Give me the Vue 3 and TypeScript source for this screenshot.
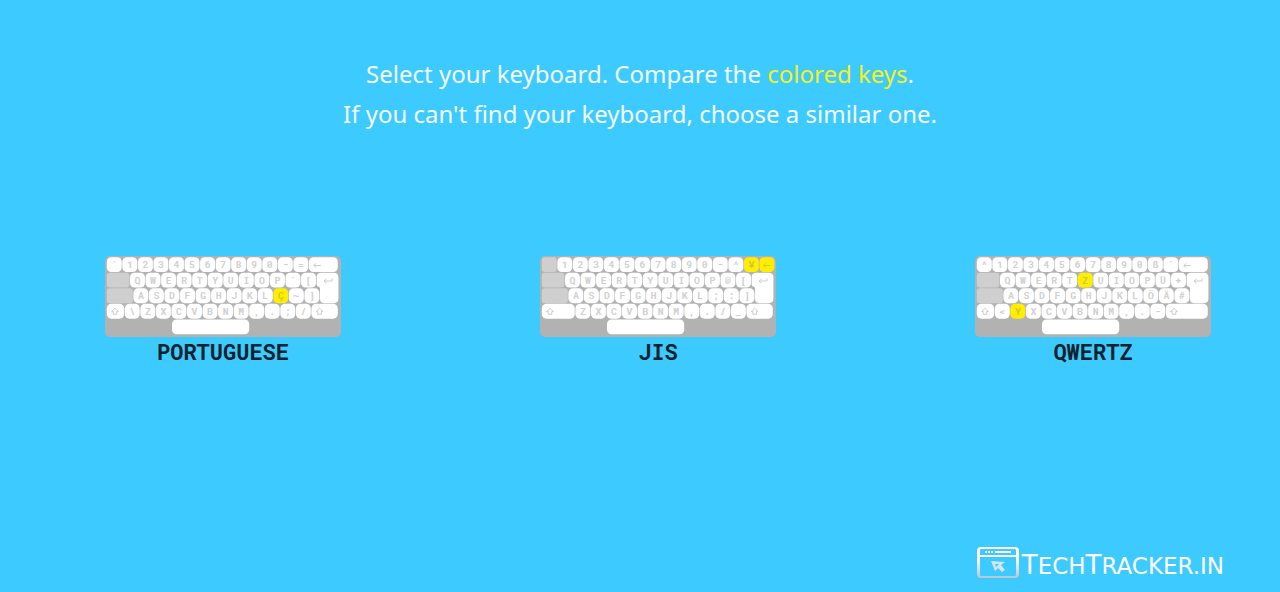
<script setup lang="ts">
type Tone = 'light' | 'muted' | 'accent'

interface Key {
  x: number
  y: number
  width: number
  label: string
  tone: Tone
}

interface Keyboard {
  name: string
  keys: Key[]
}

// Drawing units: ten per pixel at the keyboard's natural size.
const PITCH = 155.5
const GAP = 6
const LEFT = 18
const RIGHT = 2334
const ROWS = [12, 167, 323, 478, 634]
const KEY_HEIGHT = 149

function run(row: number, start: number, labels: string, accents = ''): Key[] {
  return labels.split(' ').map((label, i) => ({
    x: start + i * PITCH,
    y: ROWS[row],
    width: PITCH - GAP,
    label,
    tone: accents.includes(label) ? 'accent' : 'light',
  }))
}

function wide(row: number, start: number, end: number, label = '', tone: Tone = 'light'): Key {
  return { x: start, y: ROWS[row], width: end - start - GAP, label, tone }
}

const shared: Key[] = [
  wide(1, LEFT, 250, '', 'muted'),
  wide(2, LEFT, 284, '', 'muted'),
  wide(4, 670, 1448),
]

const keyboards: Keyboard[] = [
  {
    name: 'PORTUGUESE',
    keys: [
      ...shared,
      ...run(0, LEFT, '` 1 2 3 4 5 6 7 8 9 0 - ='),
      wide(0, 2040, RIGHT, '←'),
      ...run(1, 250, 'Q W E R T Y U I O P ´ ['),
      ...run(2, 284, 'A S D F G H J K L Ç ~ ]', 'Ç'),
      wide(3, LEFT, 198, '⇧'),
      ...run(3, 198, '\\ Z X C V B N M , . ; /'),
      wide(3, 2064, RIGHT, '⇧'),
    ],
  },
  {
    name: 'JIS',
    keys: [
      ...shared,
      wide(0, LEFT, 173, '', 'muted'),
      ...run(0, 173, '1 2 3 4 5 6 7 8 9 0 - ^ ¥ ←', '¥←'),
      ...run(1, 250, 'Q W E R T Y U I O P @ ['),
      ...run(2, 284, 'A S D F G H J K L ; : ]'),
      wide(3, LEFT, 354, '⇧'),
      ...run(3, 354, 'Z X C V B N M , . / _'),
      wide(3, 2064, RIGHT, '⇧'),
    ],
  },
  {
    name: 'QWERTZ',
    keys: [
      ...shared,
      ...run(0, LEFT, '^ 1 2 3 4 5 6 7 8 9 0 ß ´'),
      wide(0, 2040, RIGHT, '←'),
      ...run(1, 250, 'Q W E R T Z U I O P Ü +', 'Z'),
      ...run(2, 284, 'A S D F G H J K L Ö Ä #'),
      wide(3, LEFT, 198, '⇧'),
      ...run(3, 198, '< Y X C V B N M , . -', 'Y'),
      wide(3, 1908, RIGHT, '⇧'),
    ],
  },
]

function symbolAt(key: Key): string {
  return `translate(${key.x + Math.min(key.width / 2, 82)} ${key.y + 75})`
}
</script>

<template>
  <main class="screen">
    <h1 class="intro">
      Select your keyboard. Compare the <span class="hint">colored keys</span>.<br />
      If you can't find your keyboard, choose a similar one.
    </h1>

    <div class="choices">
      <button v-for="board in keyboards" :key="board.name" type="button" class="choice">
        <svg class="board" viewBox="0 0 2360 810" aria-hidden="true">
          <rect class="case" width="2360" height="810" rx="50" />
          <path
            class="light"
            d="M2162 167H2288Q2334 167 2334 213V426Q2334 472 2288 472H2192Q2150 472 2150 426V323Q2150 310 2132 306Q2116 300 2116 280V213Q2116 167 2162 167Z"
          />
          <path class="arrow" d="M2270 222V250H2190M2216 228L2190 250L2216 272" />
          <template v-for="(key, i) in board.keys" :key="i">
            <rect
              :class="key.tone"
              :x="key.x"
              :y="key.y"
              :width="key.width"
              :height="KEY_HEIGHT"
              :rx="key.tone === 'muted' ? 30 : 46"
            />
            <path
              v-if="key.label === '←'"
              class="arrow"
              :class="{ onaccent: key.tone === 'accent' }"
              :transform="symbolAt(key)"
              d="M36 8H-34M-10 -14L-34 8L-10 30"
            />
            <path
              v-else-if="key.label === '⇧'"
              class="arrow"
              :transform="symbolAt(key)"
              d="M0 -30L34 2H18V30H-18V2H-34Z"
            />
            <text
              v-else-if="key.label"
              class="legend"
              :class="{ onaccent: key.tone === 'accent' }"
              :x="key.x + key.width / 2"
              :y="key.y + 108"
            >{{ key.label }}</text>
          </template>
        </svg>
        <span class="name">{{ board.name }}</span>
      </button>
    </div>

    <footer class="brand">
      <svg class="brand-icon" viewBox="0 0 42 31" aria-hidden="true">
        <defs>
          <linearGradient id="frame" x1="0" y1="0" x2="0" y2="1">
            <stop offset="0.35" stop-color="#ffffff" />
            <stop offset="1" stop-color="#b4c6d4" />
          </linearGradient>
        </defs>
        <path
          fill="url(#frame)"
          fill-rule="evenodd"
          d="M4 0H38Q42 0 42 4V27Q42 31 38 31H4Q0 31 0 27V4Q0 0 4 0ZM4 2Q3 2 3 4V8H39V4Q39 2 38 2ZM3 10V27Q3 29 4 29H38Q39 29 39 27V10Z"
        />
        <path class="bar" d="M8 5H10M11 5H13M14 5H16M18 5H34" />
        <path
          fill="#d5e5ef"
          fill-rule="evenodd"
          d="M14 14L28 15L24 18L28 23L25 25L21 21L18 24ZM18 17L19 20L22 17Z"
        />
      </svg>
      <span class="brand-name">T<span class="brand-small">ECH</span>T<span class="brand-small">RACKER.IN</span></span>
    </footer>
  </main>
</template>

<style>
html,
body {
  background: #3dcaff;
}
</style>

<style scoped>
.screen {
  box-sizing: border-box;
  display: flex;
  flex-direction: column;
  min-height: 100vh;
  padding-top: 54px;
  background: #3dcaff;
  font-family: "Noto Sans", sans-serif;
}

.intro {
  margin: 0;
  color: #f4fcff;
  font-size: 24px;
  font-weight: 400;
  line-height: 40px;
  text-align: center;
}

.hint {
  color: #f6f01c;
}

.choices {
  display: flex;
  justify-content: space-between;
  margin-top: 122px;
  padding: 0 69px 0 105px;
}

.choice {
  display: flex;
  flex-direction: column;
  align-items: center;
  padding: 0;
  border: 0;
  background: none;
  cursor: pointer;
}

.board {
  display: block;
  width: 236px;
}

.name {
  color: #0e222d;
  font-family: "Roboto Mono", "DejaVu Sans Mono", monospace;
  font-size: 22px;
  font-weight: 700;
  line-height: 30px;
}

.case {
  fill: #b2b2b2;
}

.light {
  fill: #ffffff;
}

.muted {
  fill: #cfcfcf;
}

.accent {
  fill: #ffee00;
}

.legend {
  fill: #d0d0d0;
  font-family: "Roboto Mono", "Liberation Mono", monospace;
  font-size: 98px;
  font-weight: 700;
  text-anchor: middle;
}

.legend.onaccent {
  fill: #d2c53a;
}

.arrow {
  fill: none;
  stroke: #c8c8c8;
  stroke-width: 9px;
}

.arrow.onaccent {
  stroke: #d2c53a;
}

.brand {
  display: flex;
  align-items: center;
  align-self: flex-end;
  gap: 3px;
  margin-top: auto;
  padding: 0 56px 14px 0;
}

.brand-icon {
  width: 42px;
}

.bar {
  fill: none;
  stroke: #ffffff;
  stroke-width: 2px;
}

.brand-name {
  padding-top: 7px;
  color: #ffffff;
  font-family: "DejaVu Sans", sans-serif;
  font-size: 26px;
  line-height: 24px;
}

.brand-small {
  font-size: 23px;
}
</style>
